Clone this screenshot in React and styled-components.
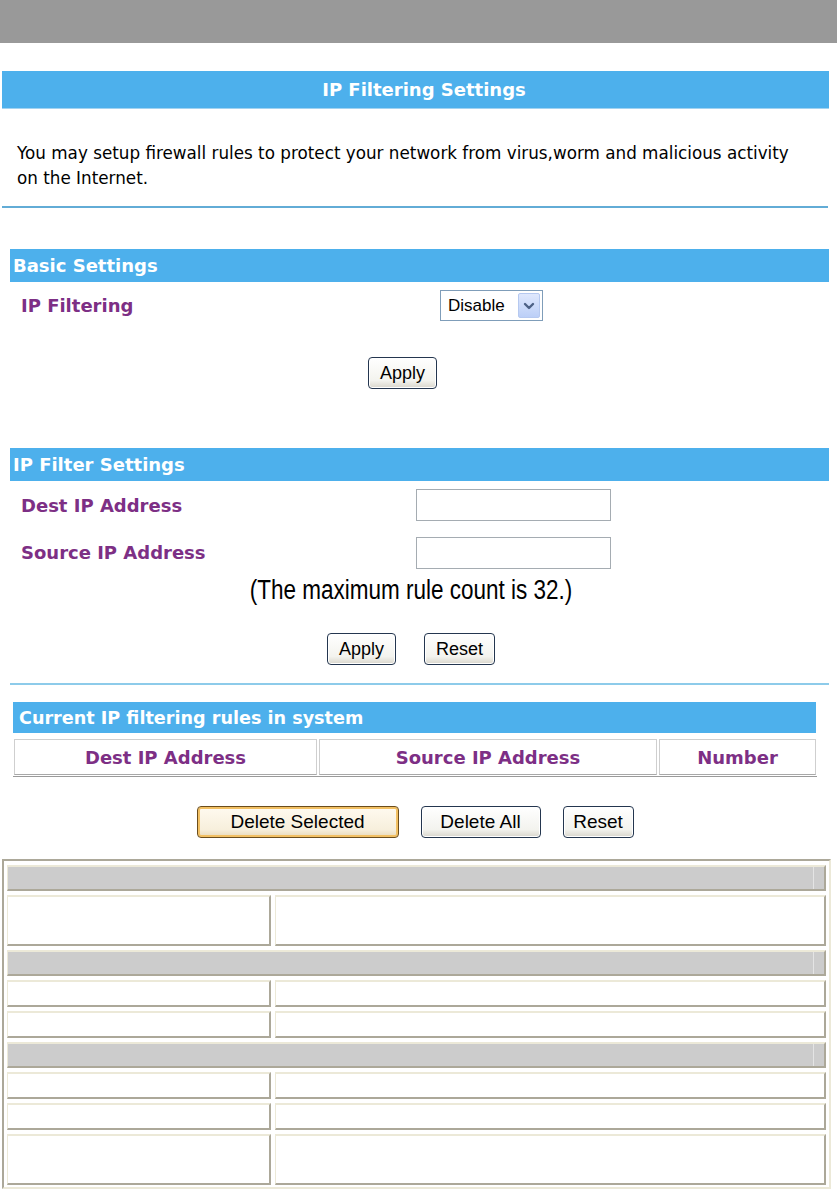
import React from "react";
import styled, { createGlobalStyle } from "styled-components";

const verdana = `"DejaVu Sans", Verdana, sans-serif`;
const arial = `"Liberation Sans", Arial, sans-serif`;

const blue = "#4db0ec";
const purple = "#7d2f85";
const xpDark = "#aca899";
const xpLight = "#ece9d8";

const GlobalStyle = createGlobalStyle`
  html, body {
    margin: 0;
    padding: 0;
    background: #fff;
  }
  body {
    font-family: ${arial};
    color: #000;
  }
  * {
    box-sizing: border-box;
  }
`;

const TopBar = styled.div`
  height: 43px;
  background: #999999;
`;

const Content = styled.div`
  padding-left: 2px;
`;

const TitleBar = styled.div`
  margin-top: 28px;
  width: 827px;
  height: 38px;
  display: flex;
  align-items: center;
  justify-content: center;
  padding-left: 17px;
  background: ${blue};
  border-bottom: 1px solid #a2d3f1;
  color: #fff;
  font-family: ${verdana};
  font-weight: bold;
  font-size: 18px;
`;

const Intro = styled.p`
  margin: 32px 0 0;
  padding-left: 15px;
  font-family: ${verdana};
  font-size: 16.8px;
  line-height: 25px;
  white-space: nowrap;
`;

const Rule = styled.div`
  margin-top: ${(p) => p.$mt}px;
  width: ${(p) => p.$w}px;
  height: 2px;
  background: ${(p) => p.$color};
`;

const Section = styled.section`
  margin-left: 8px;
  width: 819px;
`;

const SectionBar = styled.div`
  margin-top: ${(p) => p.$mt}px;
  margin-left: ${(p) => (p.$short ? 3 : 0)}px;
  margin-right: ${(p) => (p.$short ? 13 : 0)}px;
  height: ${(p) => p.$h}px;
  display: flex;
  align-items: center;
  padding-left: ${(p) => (p.$short ? 6 : 3)}px;
  background: ${blue};
  color: #fff;
  font-family: ${verdana};
  font-weight: bold;
  font-size: ${(p) => (p.$short ? 17.6 : 18)}px;
`;

const FieldRow = styled.div`
  height: ${(p) => p.$h}px;
  display: grid;
  grid-template-columns: ${(p) => p.$labelWidth}px auto;
  align-items: center;
  padding-left: 11px;
`;

const Label = styled.span`
  color: ${purple};
  font-family: ${verdana};
  font-weight: bold;
  font-size: 18px;
`;

const SelectBox = styled.div`
  width: 103px;
  height: 31px;
  display: flex;
  align-items: center;
  justify-content: space-between;
  padding: 0 2px 0 7px;
  border: 1px solid #7f9db9;
  background: #fff;
  font-family: ${arial};
  font-size: 17px;
`;

const SelectArrow = styled.span`
  width: 22px;
  height: 25px;
  display: flex;
  align-items: center;
  justify-content: center;
  border: 1px solid #b6c9f0;
  border-radius: 2px;
  background: linear-gradient(#dfe8fd, #bccff7);
`;

const TextInput = styled.input`
  width: 195px;
  height: 32px;
  margin: 0;
  padding: 0 4px;
  border: 1px solid #a5acb2;
  background: #fff;
  font-family: ${arial};
  font-size: 16px;
`;

const ButtonRow = styled.div`
  margin-top: ${(p) => p.$mt}px;
  display: flex;
  justify-content: center;
  gap: ${(p) => p.$gap || 0}px;
  padding-right: ${(p) => p.$shift}px;
`;

const Button = styled.button`
  width: ${(p) => p.$w}px;
  height: 32px;
  margin: 0;
  padding: 0;
  border: 1px solid ${(p) => (p.$focused ? "#6b4d1c" : "#24364f")};
  border-radius: 4px;
  background: ${(p) =>
    p.$focused
      ? "linear-gradient(#fffaf0, #f7efdc 75%, #e8d9b8)"
      : "linear-gradient(#ffffff, #f3f3ee 75%, #d9d6cc)"};
  box-shadow: ${(p) =>
    p.$focused ? "inset 0 0 0 2px #f2c063" : "inset 0 0 0 1px #fff"};
  color: #000;
  font-family: ${arial};
  font-size: ${(p) => p.$fs || 18}px;
`;

const Note = styled.div`
  height: 28px;
  line-height: 28px;
  text-align: center;
  padding-right: 17px;
  font-family: ${arial};
  font-size: 22.5px;
  transform: scaleY(1.25);
`;

const RulesTable = styled.div`
  margin: 5px 12px 0 3px;
  height: 39px;
  display: grid;
  grid-template-columns: 305px 340px 1fr;
  border-bottom: 1px solid #9a9a9a;
`;

const HeadCell = styled.div`
  display: flex;
  align-items: center;
  justify-content: center;
  margin: 1px;
  border: 1px solid #cfcfcf;
  border-bottom-color: #a8a8a8;
  color: ${purple};
  font-family: ${verdana};
  font-weight: bold;
  font-size: 18px;
`;

const DocTable = styled.div`
  margin-top: 21px;
  width: 829px;
  display: grid;
  grid-template-columns: 264px 551px;
  gap: 4px;
  padding: 4px 3px 2px;
  border-style: solid;
  border-width: 2px;
  border-color: ${xpDark} ${xpLight} ${xpLight} ${xpDark};
`;

const DocHead = styled.div`
  grid-column: 1 / -1;
  height: 26px;
  display: flex;
  background: #cccccc;
  border-style: solid;
  border-width: 2px 2px 2px 1px;
  border-color: ${xpLight} ${xpDark} ${xpDark} ${xpLight};
`;

const DocHeadFill = styled.div`
  flex: 1;
`;

const DocHeadEnd = styled.div`
  width: 11px;
  border-left: 1px solid #e4e4e4;
`;

const DocCell = styled.div`
  height: ${(p) => p.$h}px;
  background: #fff;
  border-style: solid;
  border-width: 2px 2px 2px 1px;
  border-color: ${xpLight} ${xpDark} ${xpDark} ${xpLight};
`;

const docGroups = [[51], [27, 27], [27, 27, 51]];

const Chevron = () => (
  <svg width="12" height="10" viewBox="0 0 12 10">
    <polyline
      points="2,3 6,7 10,3"
      fill="none"
      stroke="#4d6185"
      strokeWidth="2.4"
      strokeLinecap="round"
      strokeLinejoin="round"
    />
  </svg>
);

export default function App() {
  return (
    <>
      <GlobalStyle />
      <TopBar />
      <Content>
        <TitleBar>IP Filtering Settings</TitleBar>
        <Intro>
          You may setup firewall rules to protect your network from
          virus,worm and malicious activity
          <br />
          on the Internet.
        </Intro>
        <Rule $mt={15} $w={826} $color="#62acd6" />

        <Section>
          <SectionBar $mt={41} $h={33}>
            Basic Settings
          </SectionBar>
          <FieldRow $h={47} $labelWidth={419}>
            <Label>IP Filtering</Label>
            <SelectBox>
              Disable
              <SelectArrow>
                <Chevron />
              </SelectArrow>
            </SelectBox>
          </FieldRow>
          <ButtonRow $mt={28} $shift={34}>
            <Button $w={69}>Apply</Button>
          </ButtonRow>

          <SectionBar $mt={59} $h={33}>
            IP Filter Settings
          </SectionBar>
          <FieldRow $h={48} $labelWidth={395}>
            <Label>Dest IP Address</Label>
            <TextInput type="text" />
          </FieldRow>
          <FieldRow $h={47} $labelWidth={395}>
            <Label>Source IP Address</Label>
            <TextInput type="text" />
          </FieldRow>
          <Note>(The maximum rule count is 32.)</Note>
          <ButtonRow $mt={29} $shift={17} $gap={28}>
            <Button $w={69}>Apply</Button>
            <Button $w={71}>Reset</Button>
          </ButtonRow>
          <Rule $mt={18} $w={819} $color="#8dcbea" />

          <SectionBar $mt={17} $h={31} $short>
            Current IP filtering rules in system
          </SectionBar>
          <RulesTable>
            <HeadCell>Dest IP Address</HeadCell>
            <HeadCell>Source IP Address</HeadCell>
            <HeadCell>Number</HeadCell>
          </RulesTable>
          <ButtonRow $mt={29} $shift={9} $gap={22}>
            <Button $w={202} $fs={19} $focused>
              Delete Selected
            </Button>
            <Button $w={120} $fs={19}>
              Delete All
            </Button>
            <Button $w={71} $fs={19}>
              Reset
            </Button>
          </ButtonRow>
        </Section>

        <DocTable>
          {docGroups.map((rows, g) => (
            <React.Fragment key={g}>
              <DocHead>
                <DocHeadFill />
                <DocHeadEnd />
              </DocHead>
              {rows.map((h, r) => (
                <React.Fragment key={r}>
                  <DocCell $h={h} />
                  <DocCell $h={h} />
                </React.Fragment>
              ))}
            </React.Fragment>
          ))}
        </DocTable>
      </Content>
    </>
  );
}
